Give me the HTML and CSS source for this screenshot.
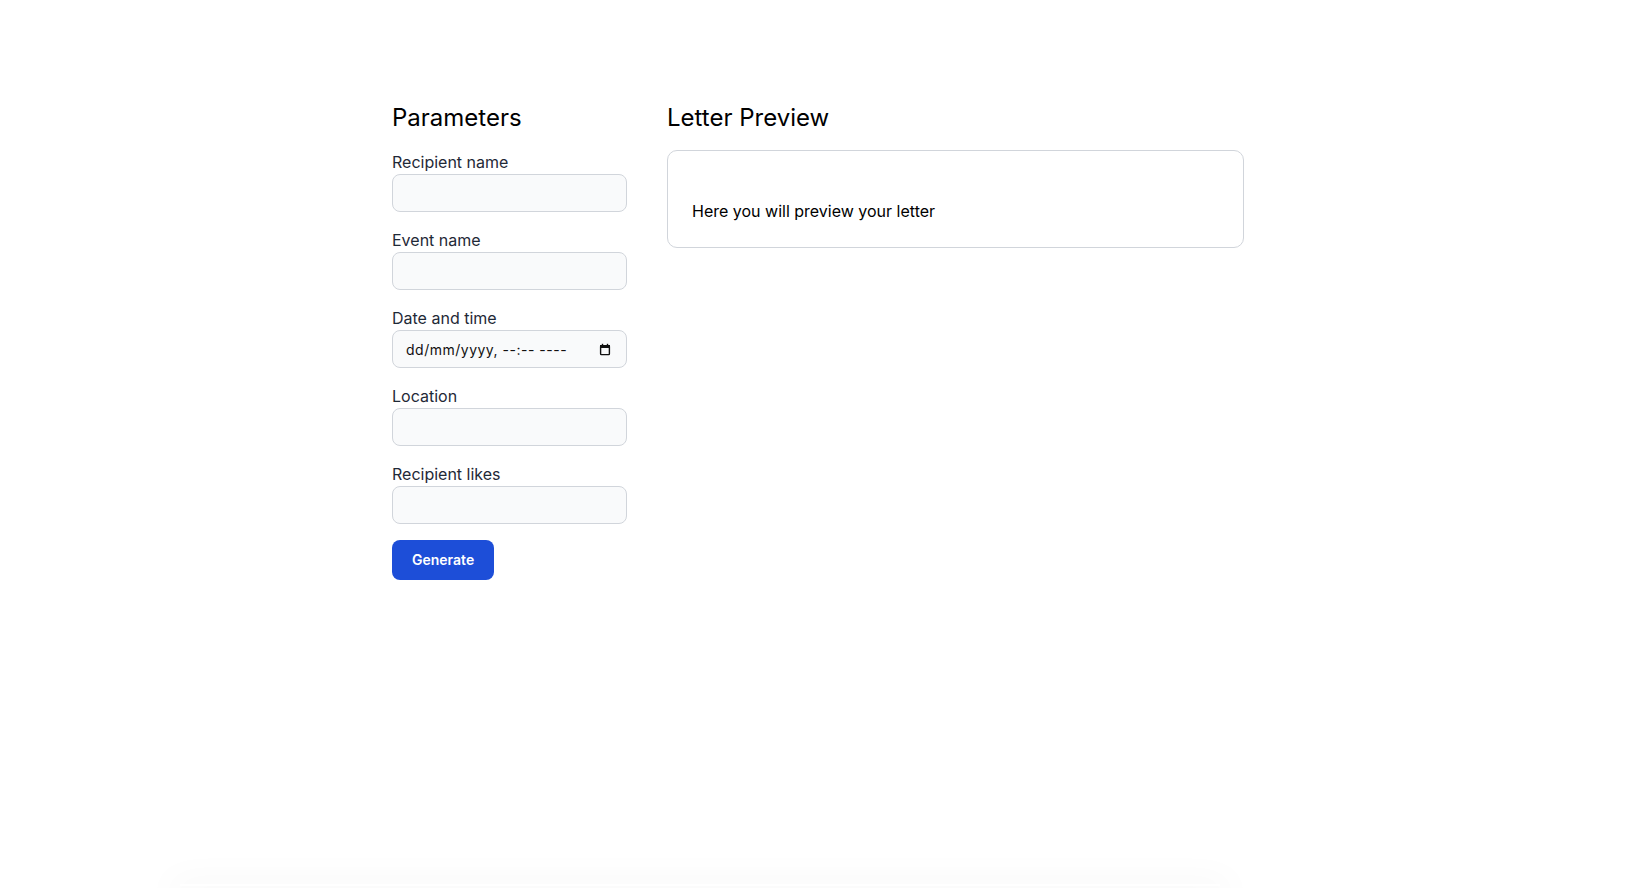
FILE: index.html
```html
<!DOCTYPE html>
<html lang="en">
<head>
<meta charset="utf-8">
<title>Letter generator</title>
<link rel="stylesheet" href="styles.css">
</head>
<body>
<div class="page">
  <main class="layout">
    <section class="params">
      <h2 class="title">Parameters</h2>
      <form class="form">
        <div class="field">
          <label class="label" for="rn">Recipient name</label>
          <input class="input" id="rn" type="text">
        </div>
        <div class="field">
          <label class="label" for="en">Event name</label>
          <input class="input" id="en" type="text">
        </div>
        <div class="field">
          <label class="label" for="dt">Date and time</label>
          <div class="date-wrap">
            <input class="input date" id="dt" type="text" placeholder="dd/mm/yyyy, --:-- ----">
            <svg class="cal" width="12" height="13" viewBox="0 0 12 13" aria-hidden="true">
              <rect x="1.6" y="2.6" width="8.8" height="9" rx="0.8" fill="none" stroke="#111" stroke-width="1.4"/>
              <rect x="1" y="2" width="10" height="3" fill="#111"/>
              <rect x="2.8" y="0.8" width="1.4" height="2" fill="#111"/>
              <rect x="7.8" y="0.8" width="1.4" height="2" fill="#111"/>
            </svg>
          </div>
        </div>
        <div class="field">
          <label class="label" for="lo">Location</label>
          <input class="input" id="lo" type="text">
        </div>
        <div class="field">
          <label class="label" for="rl">Recipient likes</label>
          <input class="input" id="rl" type="text">
        </div>
        <div class="actions">
          <button class="btn" type="button">Generate</button>
        </div>
      </form>
    </section>
    <section class="preview-col">
      <h2 class="title">Letter Preview</h2>
      <div class="preview">
        <p class="preview-text"><br>Here you will preview your letter</p>
      </div>
    </section>
  </main>
  <div class="footer-shadow"></div>
</div>
</body>
</html>
```
FILE: styles.css
```css
html, body {
  margin: 0;
  padding: 0;
  height: 100%;
  overflow: hidden;
  background: #ffffff;
}

body {
  font-family: Inter, "Liberation Sans", sans-serif;
  color: #111827;
}

.page {
  display: flex;
  flex-direction: column;
  padding-top: 102px;
}

.layout {
  width: 852px;
  padding-right: 2px;
  margin: 0 auto;
  display: flex;
  gap: 40px;
  align-items: flex-start;
}

.params {
  width: 235px;
  flex: none;
}

.preview-col {
  flex: 1;
}

.title {
  margin: 0 0 16px;
  font-size: 24px;
  line-height: 32px;
  font-weight: 400;
  color: #000000;
}

.form {
  display: flex;
  flex-direction: column;
  gap: 16px;
}

.field {
  display: flex;
  flex-direction: column;
}

.label {
  font-size: 16px;
  line-height: 24px;
  color: #1f2937;
}

.input {
  box-sizing: border-box;
  width: 100%;
  height: 38px;
  padding: 8px 12px;
  font-family: inherit;
  font-size: 14px;
  line-height: 20px;
  color: #111827;
  background: #f9fafb;
  border: 1px solid #d1d5db;
  border-radius: 8px;
  outline: none;
}

.date-wrap {
  position: relative;
}

.date {
  padding-left: 13px;
  padding-right: 36px;
}

.date::placeholder {
  color: #111111;
  opacity: 1;
  letter-spacing: 0.5px;
}

.cal {
  position: absolute;
  right: 16px;
  top: 13px;
}

.actions {
  display: flex;
}

.btn {
  font-family: inherit;
  font-size: 14px;
  line-height: 20px;
  font-weight: 600;
  color: #ffffff;
  background: #1d4ed8;
  border: none;
  border-radius: 8px;
  padding: 10px 20px;
  cursor: pointer;
}

.preview {
  box-sizing: border-box;
  border: 1px solid #d1d5db;
  border-radius: 10px;
  padding: 24px;
  background: #ffffff;
}

.preview-text {
  margin: 0;
  font-size: 16px;
  line-height: 24px;
  color: #000000;
}

.footer-shadow {
  margin: 304px 0 0 180px;
  width: 1040px;
  height: 2px;
  flex: none;
  border-radius: 40px;
  box-shadow: 0 6px 36px 10px rgba(0, 0, 0, 0.035);
}
```
